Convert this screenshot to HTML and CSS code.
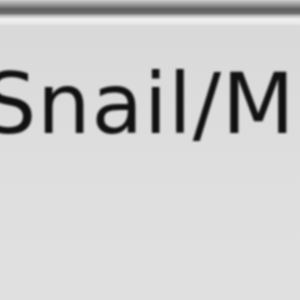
FILE: index.html
```html
<!DOCTYPE html>
<html lang="en">
<head>
  <meta charset="UTF-8">
  <title>Snail/M</title>
  <link rel="stylesheet" href="styles.css">
</head>
<body>
  <div class="toolbar"></div>
  <div class="panel">
    <div class="path-label">Snail/M</div>
  </div>
</body>
</html>
```

FILE: styles.css
```css
body {
  margin: 0;
  padding: 0;
  width: 300px;
  height: 300px;
  overflow: hidden;
  background-color: #e0e0e0;
  font-family: 'DejaVu Sans', Verdana, sans-serif;
}

.toolbar {
  height: 26px;
  background: linear-gradient(to bottom, #cccccc 0px, #a0a0a0 4px, #606060 9px, #6a6a6a 13px, #bdbdbd 16px, #eeeeee 19px, #eaeaea 23px, #d9d9d9 26px);
}

.panel {
  height: 274px;
  background: linear-gradient(to bottom, #d9d9d9 0px, #dddddd 120px, #e0e0e0 220px);
  overflow: hidden;
}

.path-label {
  margin-left: -17px;
  padding-top: 28px;
  font-size: 84px;
  line-height: 100px;
  letter-spacing: 1px;
  color: #111111;
  white-space: nowrap;
  filter: blur(0.9px);
}
```
